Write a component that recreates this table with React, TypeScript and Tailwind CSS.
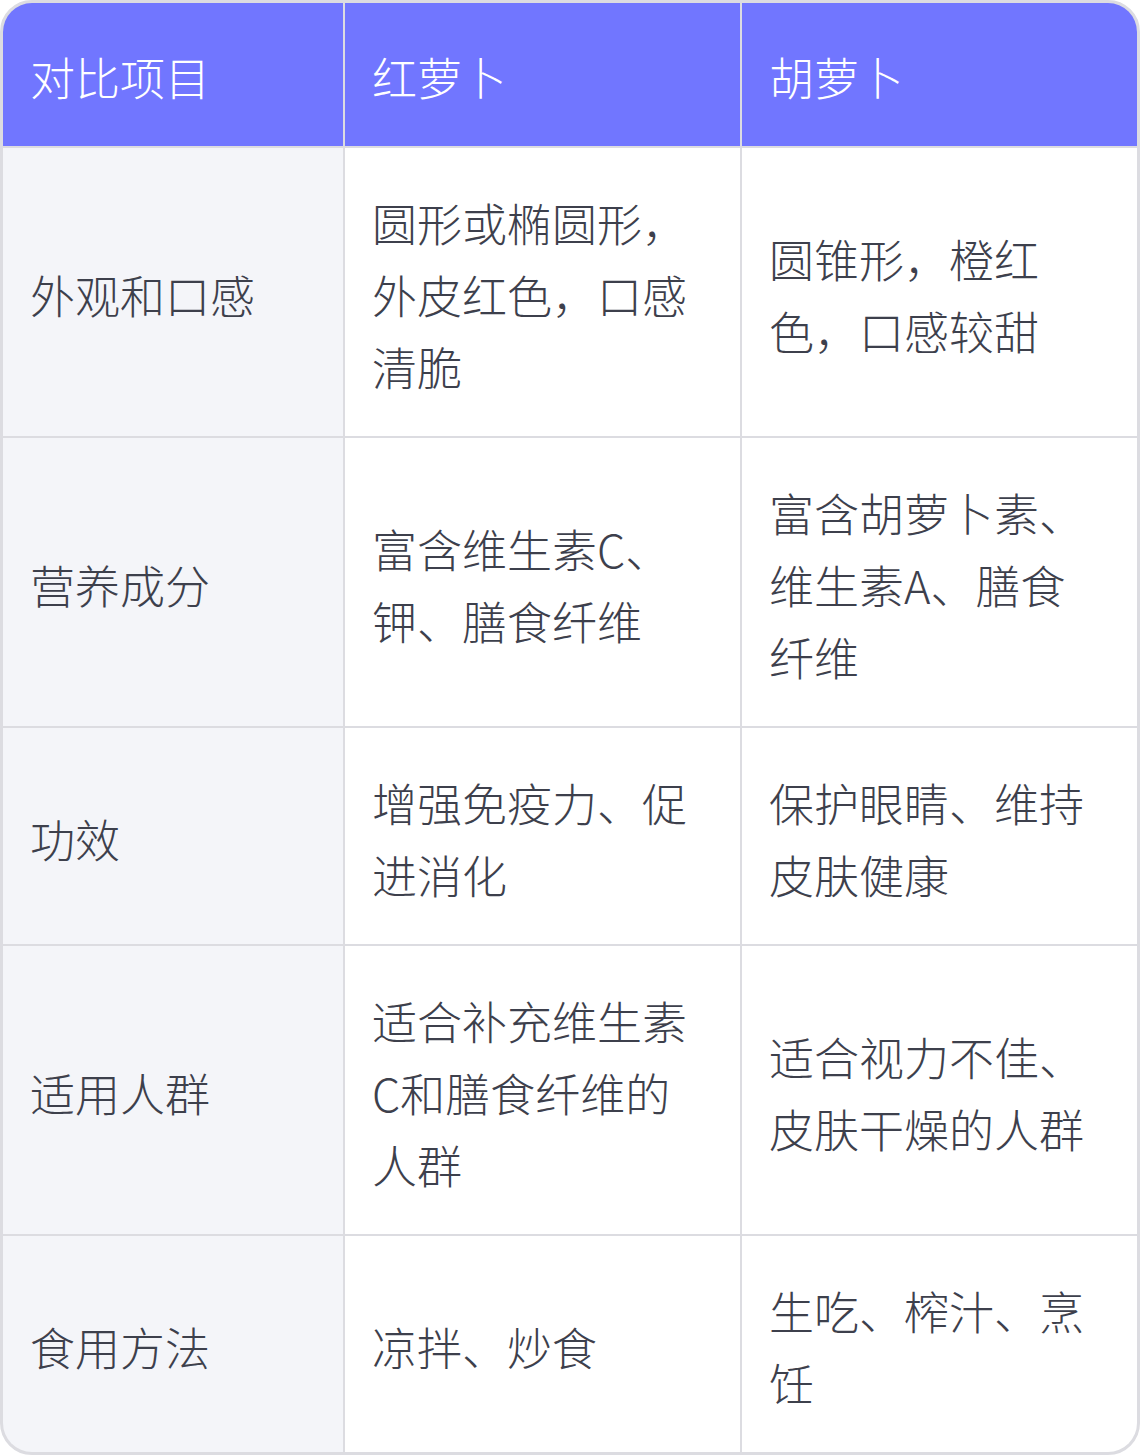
import React from 'react';

const rows: [string, string, string][] = [
  ['外观和口感', '圆形或椭圆形，外皮红色，口感清脆', '圆锥形，橙红色，口感较甜'],
  ['营养成分', '富含维生素C、钾、膳食纤维', '富含胡萝卜素、维生素A、膳食纤维'],
  ['功效', '增强免疫力、促进消化', '保护眼睛、维持皮肤健康'],
  ['适用人群', '适合补充维生素C和膳食纤维的人群', '适合视力不佳、皮肤干燥的人群'],
  ['食用方法', '凉拌、炒食', '生吃、榨汁、烹饪'],
];

const headers = ['对比项目', '红萝卜', '胡萝卜'];

const App: React.FC = () => {
  return (
    <div
      className="w-[1140px] bg-white"
      style={{ fontFamily: '"Noto Sans CJK SC", "Noto Sans", sans-serif' }}
    >
      <div className="overflow-hidden rounded-[32px] border-[3px] border-[#dcdce1] bg-[#dcdce1]">
        <div className="grid grid-cols-[340px_395px_395px] gap-[2px] text-[45px] font-light leading-[72px]">
          {/* header */}
          {headers.map((h) => (
            <div key={h} className="flex h-[143px] items-center bg-[#7176ff] px-[27px] pt-[5px] text-white">
              {h}
            </div>
          ))}

          {/* body rows */}
          {rows.map(([label, a, b]) => (
            <React.Fragment key={label}>
              <div className="flex items-center bg-[#f4f5f9] px-[27px] pt-[39px] pb-[33px] text-[#3d404c]">
                {label}
              </div>
              <div className="flex items-center bg-white px-[27px] pt-[39px] pb-[33px] text-[#3d404c]">
                <span>{a}</span>
              </div>
              <div className="flex items-center bg-white px-[27px] pt-[39px] pb-[33px] text-[#3d404c]">
                <span>{b}</span>
              </div>
            </React.Fragment>
          ))}
        </div>
      </div>
    </div>
  );
};

export default App;
